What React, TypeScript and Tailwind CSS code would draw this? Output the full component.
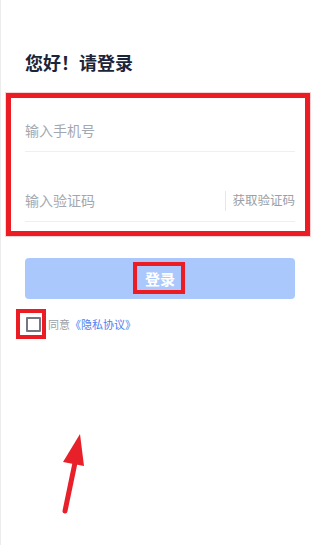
export default function App() {
  return (
    <div
      className="relative w-[320px] h-[545px] bg-white border-l border-[#ececec] pl-[24px] pr-[25px] pt-[49px] overflow-hidden"
      style={{ fontFamily: '"Noto Sans CJK SC", "Noto Sans", sans-serif' }}
    >
      {/* Title */}
      <h1 className="text-[18px] leading-[26px] font-bold text-[#1c2438]">您好！请登录</h1>

      {/* Inputs */}
      <div className="relative mt-[35px]">
        <div className="flex items-center h-[42px] border-b border-[#eeeff1]">
          <span className="text-[14px] text-[#a3a8b0]">输入手机号</span>
        </div>
        <div className="flex items-center h-[42px] mt-[28px] border-b border-[#eeeff1]">
          <span className="flex-1 text-[14px] text-[#a3a8b0]">输入验证码</span>
          <span className="w-px h-[20px] bg-[#e6e7ea] mr-[6px]" />
          <span className="text-[12.5px] text-[#9a9fa7]">获取验证码</span>
        </div>
        {/* annotation */}
        <div className="absolute left-[-19px] right-[-15px] top-[-17px] bottom-[-14px] border-[5px] border-[#ec1c24] shadow-[0_0_0_1px_#fbd3d5]" />
      </div>

      {/* Button */}
      <div className="mt-[36px] h-[41px] rounded-[4px] bg-[#abc8fd] flex items-center justify-center">
        <div className="relative">
          <span className="text-[15px] font-bold text-white">登录</span>
          <div className="absolute left-[-12px] right-[-10px] top-[-4px] bottom-[-3px] border-4 border-[#ec1c24]" />
        </div>
      </div>

      {/* Agreement */}
      <div className="mt-[17px] flex items-center">
        <div className="relative ml-[1px]">
          <div className="w-[15px] h-[15px] border-2 border-[#727884] rounded-[1px]" />
          <div className="absolute left-[-10px] top-[-8px] w-[30px] h-[30px] border-4 border-[#ec1c24]" />
        </div>
        <span className="ml-[7px] text-[11px] text-[#9ca0a7]">同意</span>
        <span className="text-[11px] text-[#4d7ff0]">《隐私协议》</span>
      </div>

      {/* Arrow annotation */}
      <svg className="absolute left-[55px] top-[430px]" width="40" height="90" viewBox="0 0 40 90">
        <line x1="9" y1="81" x2="20" y2="28" stroke="#e8202a" strokeWidth="5" strokeLinecap="round" />
        <polygon points="24,4 7,32 28,36" fill="#e8202a" />
      </svg>
    </div>
  );
}
